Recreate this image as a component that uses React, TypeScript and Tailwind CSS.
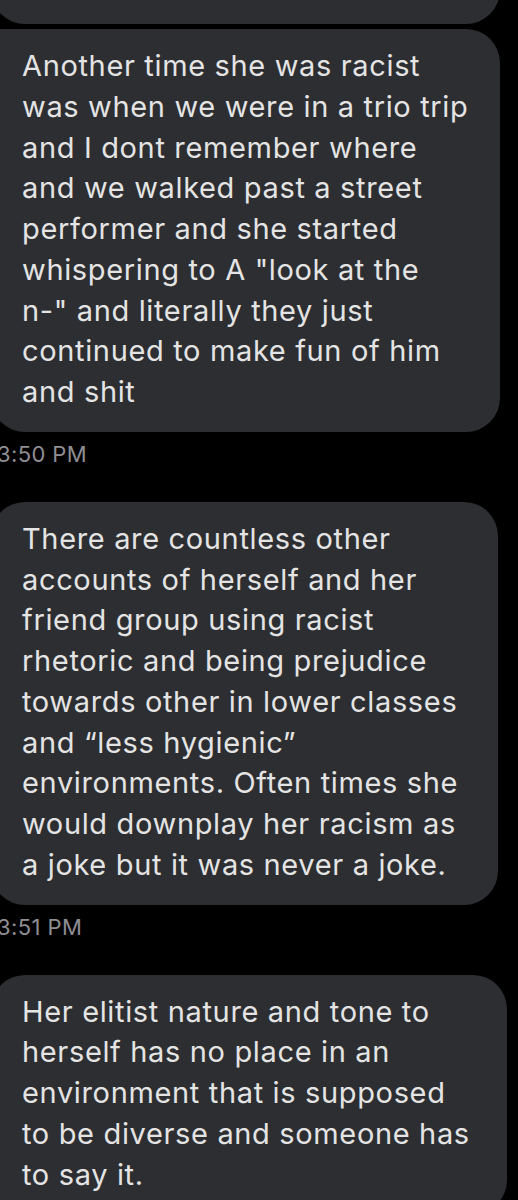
const font = { fontFamily: "Inter, 'Noto Sans', sans-serif" };

type Msg = { lines: string[]; width: string; corner: string; time?: string };

const messages: Msg[] = [
  {
    lines: [
      "Another time she was racist",
      "was when we were in a trio trip",
      "and I dont remember where",
      "and we walked past a street",
      "performer and she started",
      'whispering to A "look at the',
      'n-" and literally they just',
      "continued to make fun of him",
      "and shit",
    ],
    width: "w-[509px]",
    corner: "rounded-[34px] rounded-tl-[10px]",
    time: "3:50 PM",
  },
  {
    lines: [
      "There are countless other",
      "accounts of herself and her",
      "friend group using racist",
      "rhetoric and being prejudice",
      "towards other in lower classes",
      "and \u201cless hygienic\u201d",
      "environments. Often times she",
      "would downplay her racism as",
      "a joke but it was never a joke.",
    ],
    width: "w-[507px]",
    corner: "rounded-[34px]",
    time: "3:51 PM",
  },
  {
    lines: [
      "Her elitist nature and tone to",
      "herself has no place in an",
      "environment that is supposed",
      "to be diverse and someone has",
      "to say it.",
    ],
    width: "w-[516px]",
    corner: "rounded-[34px]",
  },
];

function Bubble({ msg }: { msg: Msg }) {
  return (
    <div
      className={`-ml-[9px] bg-[#2c2e31] pl-[31px] pr-4 pt-[17px] pb-[19px] ${msg.width} ${msg.corner}`}
    >
      {msg.lines.map((line, i) => (
        <div
          key={i}
          className="whitespace-nowrap text-[29px] leading-[40.75px] tracking-[0.65px] text-[#e4e4e4]"
        >
          {line}
        </div>
      ))}
    </div>
  );
}

export default function App() {
  return (
    <div className="h-[1200px] w-[518px] overflow-hidden bg-black" style={font}>
      {/* tail of the previous bubble */}
      <div className="-ml-[9px] -mt-[56px] h-[80px] w-[509px] rounded-[34px] bg-[#2c2e31]" />
      <div className="mt-[5px] flex flex-col">
        {messages.map((msg, i) => (
          <div key={i}>
            <Bubble msg={msg} />
            {msg.time && (
              <div className="-ml-[3px] pt-[9px] pb-[35px] text-[22px] leading-[26px] tracking-[0.4px] text-[#8e8e93]">
                {msg.time}
              </div>
            )}
          </div>
        ))}
      </div>
    </div>
  );
}
